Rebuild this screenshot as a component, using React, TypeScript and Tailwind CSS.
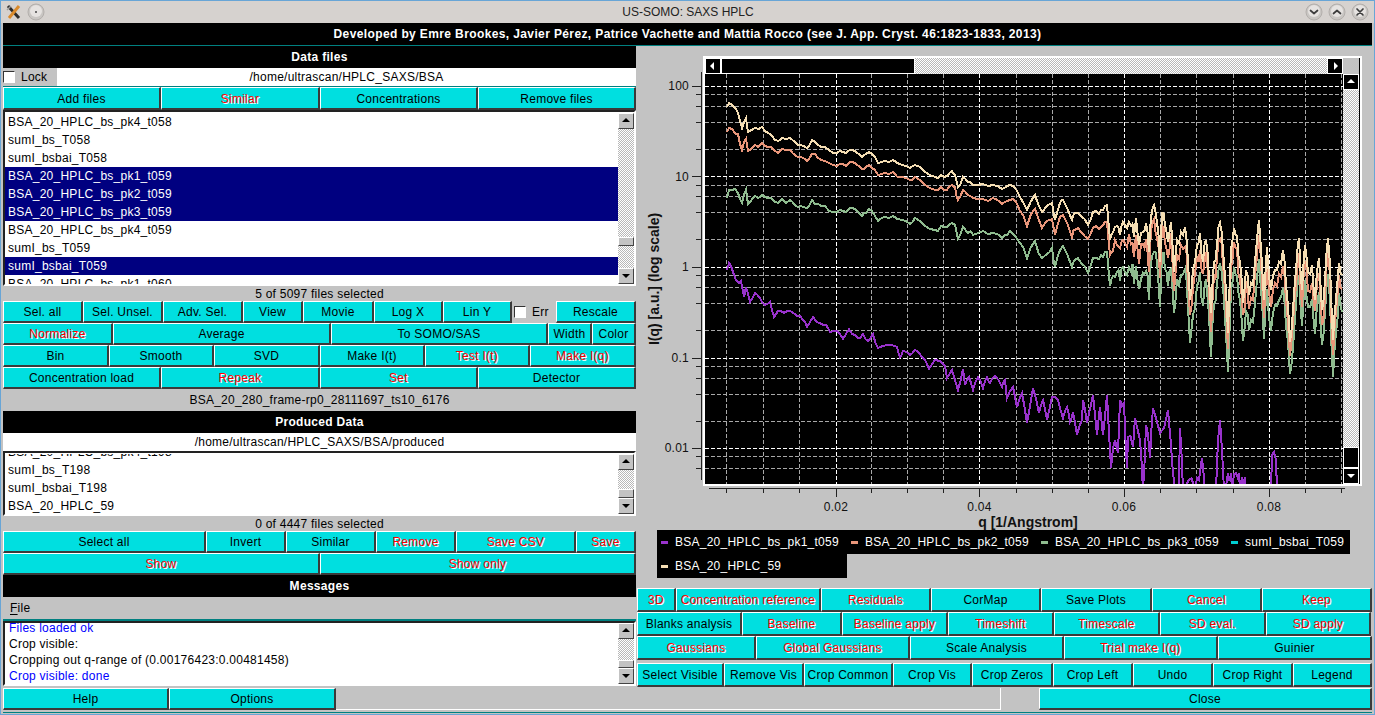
import type { ReactNode } from 'react'

const dither = 'bg-[repeating-conic-gradient(#ffffff_0%_25%,#b8b8b8_0%_50%)] bg-size-[2px_2px]'

function Btn({ t, red }: { t: string; red?: boolean }) {
  return (
    <button className={`flex items-center justify-center h-full min-w-0 overflow-hidden whitespace-nowrap bg-[#00dfe0] border-t border-l border-t-white border-l-white border-r-2 border-b-2 border-r-[#3a3a3a] border-b-[#3a3a3a] text-[12px] tracking-[0.25px] ${red ? 'text-[#ff0000] [text-shadow:1px_1px_0_#ffffff]' : 'text-black'}`}>
      {t}
    </button>
  )
}

function Arrow({ dir, dark }: { dir: 'up' | 'down' | 'left' | 'right'; dark?: boolean }) {
  const pts = { up: '2,7 6,3 10,7', down: '2,4 6,8 10,4', left: '7,2 3,6 7,10', right: '5,2 9,6 5,10' }[dir]
  return (
    <div className={`flex items-center justify-center w-[16px] h-[16px] flex-shrink-0 ${dark ? 'bg-black border border-white' : 'bg-[#c3c3c3] border border-t-white border-l-white border-r-[#444] border-b-[#444]'}`}>
      <svg width="12" height="12" viewBox="0 0 12 12"><polygon points={pts} fill={dark ? '#fff' : '#000'} /></svg>
    </div>
  )
}

function VScroll({ before, after, thumb }: { before: string; after: string; thumb: string }) {
  return (
    <div className="w-[16px] h-full flex flex-col flex-shrink-0 bg-[#c3c3c3]">
      <Arrow dir="up" />
      <div className={`${before} ${dither}`} />
      <div className={`${thumb} bg-[#c3c3c3] border border-t-white border-l-white border-r-[#444] border-b-[#444]`} />
      <div className={`${after} ${dither}`} />
      <Arrow dir="down" />
    </div>
  )
}

function Head({ children }: { children: ReactNode }) {
  return <div className="h-[22px] flex-shrink-0 flex items-center justify-center bg-black text-white font-bold text-[12px] tracking-[0.3px]">{children}</div>
}

function Row({ text, sel, cut }: { text: string; sel?: boolean; cut?: boolean }) {
  return (
    <div className={`h-[18px] flex-shrink-0 pl-[3px] leading-[18px] text-[12px] tracking-[0.25px] whitespace-nowrap ${sel ? 'bg-[#000080] text-white' : 'text-black'} ${cut ? '-mt-[11px]' : ''}`}>
      {text}
    </div>
  )
}

function Check({ label }: { label: string }) {
  return (
    <div className="flex items-center gap-[6px] text-[12px] tracking-[0.25px] text-black">
      <div className="w-[12px] h-[12px] bg-white border border-t-[#333] border-l-[#333] border-r-white border-b-white" />
      {label}
    </div>
  )
}

function TitleBtn({ d }: { d: string }) {
  return (
    <svg width="18" height="18" viewBox="0 0 18 18">
      <circle cx="9" cy="9" r="8" fill="#c9c6c3" stroke="#b3afac" />
      <circle cx="9" cy="8" r="6" fill="#e6e3e1" />
      <path d={d} fill="none" stroke="#3d3d3d" strokeWidth="1.7" strokeLinecap="round" strokeLinejoin="round" />
    </svg>
  )
}

const xMajor = [836, 979.5, 1124, 1269]
const xMinor = [726, 763, 799.5, 871, 907, 943, 1016, 1052, 1088, 1160, 1196, 1233, 1305, 1341]
const decades = [86, 176.5, 267, 358, 448]
const yMinor = decades.flatMap(d => [8.8, 20, 36, 63].map(o => d + o)).filter(y => y < 482)

const base: [number, number][] = [
  [727, 107], [729, 103], [735, 108], [738, 113], [742, 128], [746, 118], [748, 132], [755, 128], [762, 127], [768, 133], [775, 140], [782, 138],
  [790, 138], [795, 142], [800, 145], [807, 148], [812, 140], [818, 145], [825, 147], [833, 153], [840, 151], [846, 153], [853, 150], [862, 157],
  [866, 154], [872, 154], [878, 163], [885, 161], [893, 160], [902, 165], [910, 168], [915, 165], [925, 172], [935, 177], [941, 175], [947, 176],
  [952, 171], [955, 175], [958, 187], [963, 177], [968, 182], [973, 185], [983, 184], [993, 185], [1002, 189], [1007, 186], [1013, 186], [1020, 197],
  [1027, 210], [1035, 195], [1042, 212], [1047, 206], [1052, 203], [1055, 220], [1060, 203], [1063, 200], [1072, 220], [1075, 213], [1081, 216], [1088, 225],
  [1093, 212], [1099, 214], [1103, 210], [1107, 205],
]

const tail: [number, number][] = [
  [1110, 240], [1113, 232], [1117, 226], [1120, 235], [1123, 222], [1127, 228], [1131, 226], [1134, 237], [1136, 218], [1139, 245], [1143, 232], [1146, 223],
  [1149, 252], [1152, 210], [1154, 205], [1157, 222], [1160, 262], [1162, 213], [1165, 225], [1168, 242], [1171, 222], [1174, 272], [1177, 240], [1181, 232],
  [1185, 227], [1188, 262], [1190, 300], [1193, 270], [1197, 245], [1200, 233], [1203, 262], [1206, 240], [1209, 278], [1211, 313], [1214, 262], [1217, 245],
  [1220, 223], [1223, 250], [1226, 290], [1228, 333], [1231, 250], [1234, 228], [1237, 236], [1240, 262], [1243, 303], [1246, 270], [1249, 295], [1253, 285],
  [1256, 250], [1259, 220], [1262, 265], [1264, 300], [1267, 247], [1271, 290], [1275, 270], [1279, 262], [1283, 250], [1286, 285], [1290, 342], [1293, 310],
  [1296, 270], [1299, 238], [1302, 290], [1305, 245], [1308, 272], [1312, 265], [1315, 300], [1319, 258], [1322, 310], [1325, 280], [1328, 238], [1330, 265], [1333, 340], [1336, 300], [1339, 263], [1342, 275],
]

const purple: [number, number][] = [
  [727, 270], [729, 263], [733, 272], [738, 282], [741, 281], [744, 297], [746, 287], [750, 302], [755, 293], [760, 298], [765, 305], [770, 302], [774, 317],
  [778, 311], [784, 313], [790, 311], [797, 316], [803, 320], [807, 327], [813, 317], [820, 323], [826, 325], [830, 332], [837, 331], [843, 339], [849, 329],
  [855, 335], [860, 338], [863, 334], [868, 341], [873, 334], [878, 348], [887, 345], [897, 347], [900, 357], [903, 351], [910, 355], [915, 350], [922, 357],
  [929, 369], [935, 360], [945, 366], [947, 378], [952, 370], [958, 390], [963, 369], [965, 385], [969, 377], [973, 390], [978, 377], [983, 388], [987, 377],
  [990, 383], [995, 376], [1002, 387], [1005, 380], [1007, 398], [1013, 387], [1017, 407], [1022, 393], [1027, 423], [1033, 388], [1039, 413], [1043, 400],
  [1047, 420], [1052, 397], [1058, 400], [1063, 418], [1067, 407], [1070, 422], [1073, 412], [1077, 435], [1082, 420], [1083, 400], [1087, 423], [1093, 395],
  [1097, 435], [1100, 407], [1103, 435], [1107, 395], [1111, 468], [1115, 440], [1118, 453], [1120, 400], [1124, 403], [1127, 468], [1128, 437], [1133, 447],
  [1135, 418], [1140, 440], [1143, 490], [1146, 425], [1150, 458], [1153, 408], [1160, 433], [1168, 410], [1173, 473], [1175, 490], [1179, 482], [1180, 428],
  [1183, 490], [1188, 481], [1195, 490], [1199, 480], [1202, 458], [1205, 490], [1216, 490], [1218, 440], [1220, 420], [1222, 450], [1224, 490], [1228, 473],
  [1231, 473], [1232, 490], [1236, 473], [1239, 473], [1240, 490], [1242, 477], [1245, 477], [1246, 490], [1271, 490], [1272, 455], [1274, 452], [1276, 460], [1277, 490],
]

function noise(i: number) {
  const v = Math.sin(i * 12.9898) * 43758.5453
  return v - Math.floor(v)
}

function lerp(table: [number, number][], x: number) {
  for (let i = 1; i < table.length; i++) {
    if (x <= table[i][0]) {
      const [x0, y0] = table[i - 1]
      const [x1, y1] = table[i]
      return y0 + ((y1 - y0) * (x - x0)) / (x1 - x0)
    }
  }
  return table[table.length - 1][1]
}

// adds the fine jitter the measured points leave out
function densify(pts: [number, number][], seed: number) {
  const out: [number, number][] = []
  pts.forEach((p, i) => {
    out.push(p)
    const next = pts[i + 1]
    if (!next || next[0] - p[0] < 3) {return}
    const amp = p[0] > 1110 ? 16 : 4
    out.push([(p[0] + next[0]) / 2, (p[1] + next[1]) / 2 + (noise(i + seed) - 0.5) * amp])
  })
  return out
}

const orangeGap: [number, number][] = [[727, 26], [745, 20], [775, 12], [1000, 14], [1110, 16], [1342, 14]]
const greenGap: [number, number][] = [[727, 90], [745, 72], [775, 63], [875, 58], [950, 51], [1010, 47], [1110, 46], [1342, 34]]

const cream = densify([...base, ...tail], 3)
const line = (pts: [number, number][]) => pts.map(p => `${p[0]},${Math.round(p[1])}`).join(' ')
const shifted = (gap: [number, number][], seed: number, spread: number) =>
  cream.map(([x, y], i): [number, number] => [x, y + lerp(gap, x) + (noise(i + seed) - 0.5) * (x > 1110 ? spread * 3 : spread)])

const series = [
  { color: '#9932cc', pts: densify(purple, 11) },
  { color: '#8fbc8f', pts: shifted(greenGap, 31, 3) },
  { color: '#e9967a', pts: shifted(orangeGap, 7, 3) },
  { color: '#00ced1', pts: cream },
  { color: '#f5deb3', pts: cream },
]

function Plot() {
  return (
    <svg width="638" height="410" viewBox="705 74 638 410" className="block flex-shrink-0 bg-black">
      <g shapeRendering="crispEdges" strokeDasharray="4 2" strokeWidth="1">
        {yMinor.map(y => <line key={y} x1="705" x2="1343" y1={y} y2={y} stroke="#a8a8a8" />)}
        {xMinor.map(x => <line key={x} x1={x} x2={x} y1="74" y2="484" stroke="#a8a8a8" />)}
        {decades.map(y => <line key={y} x1="705" x2="1343" y1={y} y2={y} stroke="#ffffff" />)}
        {xMajor.map(x => <line key={x} x1={x} x2={x} y1="74" y2="484" stroke="#ffffff" />)}
      </g>
      {series.map(s => (
        <polyline key={s.color} points={line(s.pts)} fill="none" stroke={s.color} strokeWidth="2" strokeLinejoin="miter" shapeRendering="crispEdges" />
      ))}
    </svg>
  )
}

function Axes() {
  const labels: [string, number][] = [['100', 86], ['10', 176.5], ['1', 267], ['0.1', 358], ['0.01', 448]]
  const xLabels: [string, number][] = [['0.02', 836], ['0.04', 979.5], ['0.06', 1124], ['0.08', 1269]]
  return (
    <svg className="absolute inset-0 pointer-events-none" width="736" height="484" viewBox="636 46 736 484">
      <g stroke="#222" shapeRendering="crispEdges">
        <line x1="701.5" x2="701.5" y1="72" y2="480" />
        {decades.map(y => <line key={y} x1="692" x2="702" y1={y} y2={y} />)}
        {yMinor.map(y => <line key={y} x1="696" x2="702" y1={y} y2={y} />)}
        <line x1="709" x2="1345" y1="488.5" y2="488.5" />
        {xMajor.map(x => <line key={x} x1={x} x2={x} y1="488" y2="497" />)}
        {xMinor.map(x => <line key={x} x1={x} x2={x} y1="488" y2="493" />)}
      </g>
      <g fill="#111" fontSize="12" fontFamily="'Liberation Sans', sans-serif" letterSpacing="0.25">
        {labels.map(([t, y]) => <text key={t} x="689" y={y + 4} textAnchor="end">{t}</text>)}
        {xLabels.map(([t, x]) => <text key={t} x={x} y="511" textAnchor="middle">{t}</text>)}
      </g>
      <g fill="#111" fontSize="14" fontWeight="700" fontFamily="'Liberation Sans', sans-serif">
        <text x="1028" y="527" textAnchor="middle">q [1/Angstrom]</text>
        <text transform="translate(659 279) rotate(-90)" textAnchor="middle">I(q) [a.u.] (log scale)</text>
      </g>
    </svg>
  )
}

function LegendItem({ color, text }: { color: string; text: string }) {
  return (
    <div className="w-[190px] h-[24px] flex items-center pl-[4px] text-white text-[12px] tracking-[0.25px] whitespace-nowrap">
      <div className={`w-[7px] h-[3px] mr-[7px] ${color}`} />
      {text}
    </div>
  )
}

export default function App() {
  return (
    <div className="w-[1375px] h-[715px] flex flex-col overflow-hidden bg-[#c3c3c3] border border-[#68a5d6] font-['Liberation_Sans',Arial,sans-serif] text-black">
      <div className="h-[22px] flex-shrink-0 relative flex items-center bg-[#d6d2cf] pl-[5px]">
        <svg width="16" height="16" viewBox="0 0 16 16">
          <path d="M2 2 L13 14" stroke="#2c2c2c" strokeWidth="3" />
          <path d="M13 2 L3 14" stroke="#d98a2b" strokeWidth="3" />
          <path d="M1 6 L5 2" stroke="#a0a0a0" strokeWidth="1.5" />
        </svg>
        <svg width="18" height="18" viewBox="0 0 18 18" className="ml-[5px]">
          <circle cx="9" cy="9" r="8" fill="#c9c6c3" stroke="#b3afac" />
          <circle cx="9" cy="8" r="6" fill="#e6e3e1" />
          <circle cx="9" cy="9" r="1" fill="#444" />
        </svg>
        <span className="flex-1 text-center text-[12px] text-[#222] pl-[26px]">US-SOMO: SAXS HPLC</span>
        <div className="flex gap-[5px] pr-[5px]">
          <TitleBtn d="M5.5 7.5 L9 10.5 L12.5 7.5" />
          <TitleBtn d="M5.5 10.5 L9 7.5 L12.5 10.5" />
          <TitleBtn d="M6 6 L12 12 M12 6 L6 12" />
        </div>
      </div>

      <div className="h-[23px] flex-shrink-0 ml-[2px] mr-[2px] flex items-center justify-center bg-black border-b border-[#008080] text-white font-bold text-[12px] tracking-[0.38px]">
        Developed by Emre Brookes, Javier Pérez, Patrice Vachette and Mattia Rocco (see J. App. Cryst. 46:1823-1833, 2013)
      </div>

      <div className="h-[642px] flex-shrink-0 mx-[2px] flex">
        <div className="w-[633px] flex-shrink-0 flex flex-col">
          <Head>Data files</Head>
          <div className="h-[19px] flex-shrink-0 flex border-b border-[#008080]">
            <div className="w-[54px] flex items-center bg-[#c3c3c3]"><Check label="Lock" /></div>
            <div className="flex-1 bg-white flex items-center justify-center text-[12px] tracking-[0.25px]">/home/ultrascan/HPLC_SAXS/BSA</div>
          </div>
          <div className="h-[23px] flex-shrink-0 grid grid-cols-[158px_159px_158px_158px] [&>button]:pt-px">
            <Btn t="Add files" /><Btn t="Similar" red /><Btn t="Concentrations" /><Btn t="Remove files" />
          </div>
          <div className="h-[176px] flex-shrink-0 flex overflow-hidden bg-white pt-px border-2 border-t-[#222] border-l-[#222] border-r-white border-b-white">
            <div className="flex-1 min-w-0 flex flex-col overflow-hidden">
              <Row text="BSA_20_HPLC_bs_pk4_t058" />
              <Row text="sumI_bs_T058" />
              <Row text="sumI_bsbai_T058" />
              <Row text="BSA_20_HPLC_bs_pk1_t059" sel />
              <Row text="BSA_20_HPLC_bs_pk2_t059" sel />
              <Row text="BSA_20_HPLC_bs_pk3_t059" sel />
              <Row text="BSA_20_HPLC_bs_pk4_t059" />
              <Row text="sumI_bs_T059" />
              <Row text="sumI_bsbai_T059" sel />
              <Row text="BSA_20_HPLC_bs_pk1_t060" />
            </div>
            <VScroll before="h-[108px]" thumb="h-[9px]" after="flex-1" />
          </div>
          <div className="h-[15px] flex-shrink-0 flex items-center justify-center text-[12px] tracking-[0.25px]">5 of 5097 files selected</div>
          <div className="h-[22px] flex-shrink-0 grid grid-cols-[80px_80px_80px_60px_71px_69px_69px_44px_80px]">
            <Btn t="Sel. all" /><Btn t="Sel. Unsel." /><Btn t="Adv. Sel." /><Btn t="View" /><Btn t="Movie" /><Btn t="Log X" /><Btn t="Lin Y" />
            <div className="flex items-center pl-[2px]"><Check label="Err" /></div>
            <Btn t="Rescale" />
          </div>
          <div className="h-[22px] flex-shrink-0 grid grid-cols-[110px_218px_217px_44px_44px]">
            <Btn t="Normalize" red /><Btn t="Average" /><Btn t="To SOMO/SAS" /><Btn t="Width" /><Btn t="Color" />
          </div>
          <div className="h-[22px] flex-shrink-0 grid grid-cols-[106px_105px_106px_105px_105px_106px]">
            <Btn t="Bin" /><Btn t="Smooth" /><Btn t="SVD" /><Btn t="Make I(t)" /><Btn t="Test I(t)" red /><Btn t="Make I(q)" red />
          </div>
          <div className="h-[22px] flex-shrink-0 grid grid-cols-[158px_159px_158px_158px]">
            <Btn t="Concentration load" /><Btn t="Repeak" red /><Btn t="Set" red /><Btn t="Detector" />
          </div>
          <div className="h-[22px] flex-shrink-0 flex items-center justify-center text-[12px] tracking-[0.25px]">BSA_20_280_frame-rp0_28111697_ts10_6176</div>
          <Head>Produced Data</Head>
          <div className="h-[18px] flex-shrink-0 bg-white flex items-center justify-center text-[12px] tracking-[0.25px]">/home/ultrascan/HPLC_SAXS/BSA/produced</div>
          <div className="h-[65px] flex-shrink-0 flex overflow-hidden bg-white pt-px border-2 border-t-[#222] border-l-[#222] border-r-white border-b-white">
            <div className="flex-1 min-w-0 flex flex-col overflow-hidden">
              <Row text="BSA_20_HPLC_bs_pk4_t198" cut />
              <Row text="sumI_bs_T198" />
              <Row text="sumI_bsbai_T198" />
              <Row text="BSA_20_HPLC_59" />
            </div>
            <VScroll before="h-[20px]" thumb="h-[9px]" after="flex-1" />
          </div>
          <div className="h-[15px] flex-shrink-0 flex items-center justify-center text-[12px] tracking-[0.25px]">0 of 4447 files selected</div>
          <div className="h-[22px] flex-shrink-0 grid grid-cols-[203px_80px_90px_80px_120px_60px]">
            <Btn t="Select all" /><Btn t="Invert" /><Btn t="Similar" /><Btn t="Remove" red /><Btn t="Save CSV" red /><Btn t="Save" red />
          </div>
          <div className="h-[22px] flex-shrink-0 grid grid-cols-[317px_316px]">
            <Btn t="Show" red /><Btn t="Show only" red />
          </div>
          <Head>Messages</Head>
          <div className="h-[22px] flex-shrink-0 flex items-center pl-[7px] text-[12px] tracking-[0.25px]"><span className="underline decoration-1 underline-offset-2">F</span>ile</div>
          <div className="h-[2px] flex-shrink-0 bg-[#008080]" />
          <div className="h-[65px] flex-shrink-0 flex overflow-hidden bg-white border-2 border-t-[#222] border-l-[#222] border-r-white border-b-white">
            <div className="flex-1 min-w-0 flex flex-col pl-[4px] text-[12px] tracking-[0.25px] leading-[16px] whitespace-nowrap">
              <div className="h-[16px] flex-shrink-0 -mt-[3px] text-[#0000ff]">Files loaded ok</div>
              <div className="h-[16px] flex-shrink-0">Crop visible:</div>
              <div className="h-[16px] flex-shrink-0">Cropping out q-range of (0.00176423:0.00481458)</div>
              <div className="h-[16px] flex-shrink-0 text-[#0000ff]">Crop visible: done</div>
            </div>
            <VScroll before="h-[22px]" thumb="h-[8px]" after="flex-1" />
          </div>
          <div className="h-[2px] flex-shrink-0" />
        </div>

        <div className="w-[736px] flex-shrink-0 flex flex-col">
          <div className="h-[484px] flex-shrink-0 relative pl-[67px] pt-[10px]">
            <Axes />
            <div className="relative w-[659px] h-[430px] flex flex-col bg-black border-2 border-white">
              <div className="h-[16px] flex-shrink-0 flex">
                <Arrow dir="left" dark />
                <div className="w-[194px] flex-shrink-0 bg-black border border-white" />
                <div className={`flex-1 ${dither}`} />
                <Arrow dir="right" dark />
                <div className="w-[16px] flex-shrink-0 bg-[#c3c3c3]" />
                <div className="w-px flex-shrink-0 bg-black" />
              </div>
              <div className="flex-1 min-h-0 flex">
                <Plot />
                <div className="w-[16px] flex-shrink-0 flex flex-col">
                  <Arrow dir="up" dark />
                  <div className={`flex-1 ${dither}`} />
                  <div className="h-[21px] flex-shrink-0 bg-black border border-white" />
                  <Arrow dir="down" dark />
                </div>
                <div className="w-px flex-shrink-0 bg-black" />
              </div>
            </div>
          </div>
          <div className="ml-[21px] w-[693px] h-[48px] flex-shrink-0 flex flex-col">
            <div className="flex bg-black">
              <LegendItem color="bg-[#9932cc]" text="BSA_20_HPLC_bs_pk1_t059" />
              <LegendItem color="bg-[#e9967a]" text="BSA_20_HPLC_bs_pk2_t059" />
              <LegendItem color="bg-[#8fbc8f]" text="BSA_20_HPLC_bs_pk3_t059" />
              <div className="flex-1 min-w-0"><LegendItem color="bg-[#00ced1]" text="sumI_bsbai_T059" /></div>
            </div>
            <div className="w-[190px] bg-black"><LegendItem color="bg-[#f5deb3]" text="BSA_20_HPLC_59" /></div>
          </div>
          <div className="h-[10px] flex-shrink-0" />
          <div className="pl-px flex flex-col">
            <div className="h-[24px] grid grid-cols-[39px_145px_110px_110px_111px_110px_110px]">
              <Btn t="3D" red /><Btn t="Concentration reference" red /><Btn t="Residuals" red /><Btn t="CorMap" /><Btn t="Save Plots" /><Btn t="Cancel" red /><Btn t="Keep" red />
            </div>
            <div className="h-[24px] grid grid-cols-[105px_100px_106px_106px_106px_106px_105px]">
              <Btn t="Blanks analysis" /><Btn t="Baseline" red /><Btn t="Baseline apply" red /><Btn t="Timeshift" red /><Btn t="Timescale" red /><Btn t="SD eval." red /><Btn t="SD apply" red />
            </div>
            <div className="h-[24px] grid grid-cols-[119px_154px_154px_154px_154px]">
              <Btn t="Gaussians" red /><Btn t="Global Gaussians" red /><Btn t="Scale Analysis" /><Btn t="Trial make I(q)" red /><Btn t="Guinier" />
            </div>
            <div className="h-[3px]" />
            <div className="h-[24px] grid grid-cols-[87px_80px_89px_79px_81px_80px_80px_80px_79px]">
              <Btn t="Select Visible" /><Btn t="Remove Vis" /><Btn t="Crop Common" /><Btn t="Crop Vis" /><Btn t="Crop Zeros" /><Btn t="Crop Left" /><Btn t="Undo" /><Btn t="Crop Right" /><Btn t="Legend" />
            </div>
          </div>
        </div>
      </div>

      <div className="h-[22px] flex-shrink-0 mx-[2px] grid grid-cols-[166px_167px_665px_38px_333px]">
        <Btn t="Help" />
        <Btn t="Options" />
        <div className="border-r border-b border-white" />
        <div />
        <Btn t="Close" />
      </div>
      <div className="h-[2px] flex-shrink-0" />
      <div className="h-px flex-shrink-0 mx-[2px] bg-[#008080]" />
    </div>
  )
}
